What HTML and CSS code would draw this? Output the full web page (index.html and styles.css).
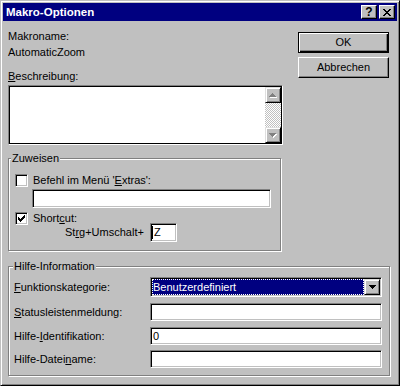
FILE: index.html
```html
<!DOCTYPE html>
<html lang="de">
<head>
<meta charset="utf-8">
<title>Makro-Optionen</title>
<link rel="stylesheet" href="styles.css">
</head>
<body>
<div class="window">
  <div class="titlebar">
    <span class="title">Makro-Optionen</span>
    <div class="tbtns">
      <div class="tbtn help">?</div>
      <div class="tbtn close">
        <svg width="8" height="7" viewBox="0 0 8 7"><path fill="#000" d="M0 0h2v1H0zM6 0h2v1H6zM1 1h2v1H1zM5 1h2v1H5zM2 2h4v1H2zM3 3h2v1H3zM2 4h4v1H2zM1 5h2v1H1zM5 5h2v1H5zM0 6h2v1H0zM6 6h2v1H6z"/></svg>
      </div>
    </div>
  </div>
  <div class="content">
    <div class="top">
      <div class="leftcol">
        <div class="lbl l-name">Makroname:</div>
        <div class="lbl l-value">AutomaticZoom</div>
        <div class="lbl l-desc"><u>B</u>eschreibung:</div>
        <div class="memo">
          <div class="memo-in">
            <div class="memo-text"></div>
            <div class="vscroll">
              <div class="sbtn">
                <svg width="8" height="5" viewBox="0 0 8 5"><path fill="#fff" d="M4 1h1v1H4zM3 2h3v1H3zM2 3h5v1H2zM1 4h7v1H1z"/><path fill="#808080" d="M3 0h1v1H3zM2 1h3v1H2zM1 2h5v1H1zM0 3h7v1H0z"/></svg>
              </div>
              <div class="track"></div>
              <div class="sbtn">
                <svg width="8" height="5" viewBox="0 0 8 5"><path fill="#fff" d="M1 1h7v1H1zM2 2h5v1H2zM3 3h3v1H3zM4 4h1v1H4z"/><path fill="#808080" d="M0 0h7v1H0zM1 1h5v1H1zM2 2h3v1H2zM3 3h1v1H3z"/></svg>
              </div>
            </div>
          </div>
        </div>
        <fieldset class="group g-assign">
          <legend>Zuweisen</legend>
          <div class="chkrow">
            <span class="chk"></span>
            <span>Befehl im Menü '<u>E</u>xtras':</span>
          </div>
          <div class="field f-menu"></div>
          <div class="chkrow r-short">
            <span class="chk">
              <svg width="7" height="7" viewBox="0 0 7 7"><path fill="#000" d="M0 2h1v3H0zM1 3h1v3H1zM2 4h1v3H2zM3 3h1v3H3zM4 2h1v3H4zM5 1h1v3H5zM6 0h1v3H6z"/></svg>
            </span>
            <span>Short<u>c</u>ut:</span>
          </div>
          <div class="keyrow">
            <span class="keylbl">St<u>r</u>g+Umschalt+</span>
            <div class="field f-key"><span class="caret"></span>Z</div>
          </div>
        </fieldset>
      </div>
      <div class="rightcol">
        <div class="btn default">OK</div>
        <div class="btn">Abbrechen</div>
      </div>
    </div>
    <fieldset class="group g-help">
      <legend>Hilfe-Information</legend>
      <div class="frow r-first">
        <span class="flbl"><u>F</u>unktionskategorie:</span>
        <div class="combo">
          <div class="combo-val"><span>Benutzerdefiniert</span></div>
          <div class="dd">
            <svg width="7" height="4" viewBox="0 0 7 4"><path fill="#000" d="M0 0h7v1H0zM1 1h5v1H1zM2 2h3v1H2zM3 3h1v1H3z"/></svg>
          </div>
        </div>
      </div>
      <div class="frow r-mid">
        <span class="flbl"><u>S</u>tatusleistenmeldung:</span>
        <div class="field f-wide"></div>
      </div>
      <div class="frow r-mid">
        <span class="flbl">Hilfe-<u>I</u>dentifikation:</span>
        <div class="field f-wide">0</div>
      </div>
      <div class="frow r-last">
        <span class="flbl">Hilfe-Datei<u>n</u>ame:</span>
        <div class="field f-wide"></div>
      </div>
    </fieldset>
  </div>
</div>
</body>
</html>
```

FILE: styles.css
```css
* { box-sizing: border-box; }

html, body {
  margin: 0;
  padding: 0;
}

body {
  width: 400px;
  height: 386px;
  overflow: hidden;
  background: #c0c0c0;
  font-family: "Liberation Sans", Arial, sans-serif;
  font-size: 11px;
  line-height: 13px;
  color: #000;
}

u { text-decoration: underline; text-underline-offset: 1px; }

.window {
  width: 400px;
  height: 386px;
  border: 1px solid;
  border-color: #c0c0c0 #000 #000 #c0c0c0;
  box-shadow: inset 1px 1px #fff, inset -1px -1px #808080;
  padding: 2px;
  background: #c0c0c0;
  display: flex;
  flex-direction: column;
}

/* title bar */
.titlebar {
  height: 18px;
  flex: none;
  background: #000080;
  display: flex;
  align-items: center;
  padding: 0 2px 0 3px;
}

.title {
  color: #fff;
  font-weight: bold;
  font-size: 11.5px;
}

.tbtns {
  margin-left: auto;
  display: flex;
  gap: 2px;
}

.tbtn {
  width: 16px;
  height: 14px;
  background: #c0c0c0;
  border: 1px solid;
  border-color: #fff #000 #000 #fff;
  box-shadow: inset -1px -1px #808080;
  display: flex;
  align-items: center;
  justify-content: center;
}

.tbtn.help {
  font-weight: bold;
  font-size: 12px;
  line-height: 12px;
}

.tbtn svg { display: block; }

/* content */
.content {
  padding: 0 7px 0 5px;
}

.top {
  display: flex;
}

.leftcol {
  width: 275px;
}

.lbl { height: 13px; }
.l-name { margin-top: 9px; }
.l-value { margin-top: 3px; }
.l-desc { margin-top: 11px; }

.memo {
  margin-top: 2px;
  width: 275px;
  height: 60px;
  border: 1px solid;
  border-color: #808080 #fff #fff #808080;
}

.memo-in {
  height: 100%;
  border: 1px solid #000;
  background: #fff;
  display: flex;
}

.memo-text { flex: 1; }

.vscroll {
  width: 16px;
  display: flex;
  flex-direction: column;
}

.sbtn {
  width: 16px;
  height: 16px;
  background: #c0c0c0;
  border: 1px solid;
  border-color: #dfdfdf #000 #000 #dfdfdf;
  box-shadow: inset 1px 1px #fff, inset -1px -1px #808080;
  display: flex;
  align-items: center;
  justify-content: center;
}

.sbtn svg { display: block; }

.track {
  flex: 1;
  background: repeating-conic-gradient(#fff 0 25%, #c0c0c0 0 50%) 0 0 / 2px 2px;
}

/* group boxes */
.group {
  margin: 0;
  padding: 0;
  min-width: 0;
  border: 1px solid #808080;
  box-shadow: 1px 1px 0 #fff, inset 1px 1px 0 #fff;
}

.group legend {
  padding: 0 1px;
  line-height: 13px;
  background: #c0c0c0;
}

.g-assign {
  margin-top: 7px;
  width: 273px;
  padding-bottom: 8px;
}

.g-assign legend { margin-left: 2px; }

.chkrow {
  display: flex;
  align-items: center;
  gap: 5px;
  height: 13px;
  margin-left: 6px;
  margin-top: 9px;
}

.chk {
  width: 13px;
  height: 13px;
  flex: none;
  background: #fff;
  border: 1px solid;
  border-color: #808080 #fff #fff #808080;
  box-shadow: inset 1px 1px #000, inset -1px -1px #c0c0c0;
}

.chk svg {
  display: block;
  margin: 2px 0 0 2px;
}

.r-short { margin-top: 4px; }

.field {
  background: #fff;
  border: 1px solid;
  border-color: #808080 #fff #fff #808080;
  box-shadow: inset 1px 1px #000, inset -1px -1px #c0c0c0;
  padding-left: 2px;
  display: flex;
  align-items: center;
}

.f-menu {
  margin: 2px 0 0 23px;
  width: 239px;
  height: 19px;
}

.keyrow {
  display: flex;
  align-items: center;
  height: 19px;
  margin-top: -2px;
  padding-left: 56px;
}

.keylbl { width: 85px; }

.f-key {
  width: 27px;
  height: 19px;
  padding-left: 1px;
}

.caret {
  width: 1px;
  height: 13px;
  background: #000;
  margin-right: 1px;
}

/* buttons */
.rightcol {
  margin-left: 15px;
  margin-top: 11px;
  display: flex;
  flex-direction: column;
  gap: 4px;
}

.btn {
  width: 91px;
  height: 21px;
  background: #c0c0c0;
  border: 1px solid;
  border-color: #fff #000 #000 #fff;
  box-shadow: inset -1px -1px #808080;
  display: flex;
  align-items: center;
  justify-content: center;
}

.btn.default {
  border: 1px solid #000;
  box-shadow: inset 1px 1px #fff, inset -1px -1px #000, inset -2px -2px #808080;
}

/* help group */
.g-help {
  margin-top: 9px;
  width: 382px;
  padding-bottom: 7px;
}

.g-help legend { margin-left: 4px; }

.frow {
  display: flex;
  align-items: center;
  padding-left: 5px;
}

.flbl { width: 136px; }

.r-first { margin-top: 4px; height: 20px; }
.r-mid { margin-top: 6px; height: 18px; }
.r-last { margin-top: 5px; height: 18px; }

.f-wide {
  width: 232px;
  height: 18px;
}

.combo {
  width: 232px;
  height: 20px;
  border: 1px solid;
  border-color: #808080 #fff #fff #808080;
  box-shadow: inset 1px 1px #000, inset -1px -1px #c0c0c0;
  background: #fff;
  padding: 1px;
  display: flex;
}

.combo-val {
  flex: 1;
  background: #000080;
  color: #fff;
  outline: 1px dotted #fff;
  outline-offset: -1px;
  display: flex;
  align-items: center;
  padding-left: 1px;
}

.dd {
  width: 16px;
  height: 16px;
  background: #c0c0c0;
  border: 1px solid;
  border-color: #dfdfdf #000 #000 #dfdfdf;
  box-shadow: inset 1px 1px #fff, inset -1px -1px #808080;
  display: flex;
  align-items: center;
  justify-content: center;
}

.dd svg { display: block; }
```
